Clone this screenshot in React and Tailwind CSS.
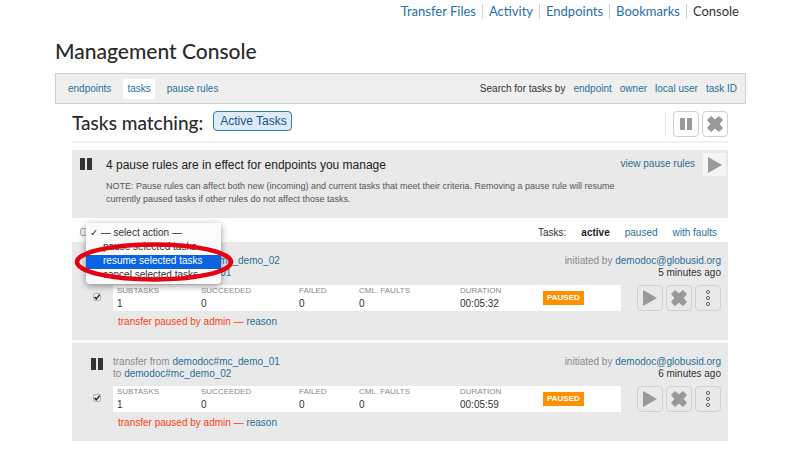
import React from "react";

const TASKS = [
  {
    id: "t1",
    from: "demodoc#mc_demo_02",
    to: "demodoc#mc_demo_01",
    age: "5 minutes ago",
    duration: "00:05:32",
  },
  {
    id: "t2",
    from: "demodoc#mc_demo_01",
    to: "demodoc#mc_demo_02",
    age: "6 minutes ago",
    duration: "00:05:59",
  },
];

function PauseIcon({ className }) {
  return (
    <svg viewBox="0 0 12 12" className={className} fill="currentColor" aria-hidden="true">
      <rect x="0" y="0" width="5" height="12" rx="0.6" />
      <rect x="7" y="0" width="5" height="12" rx="0.6" />
    </svg>
  );
}

function PlayIcon() {
  return (
    <svg viewBox="0 0 14 16" className="h-4 w-3.5" fill="currentColor" aria-hidden="true">
      <path d="M0 0L14 8L0 16Z" />
    </svg>
  );
}

function CrossIcon() {
  return (
    <svg viewBox="0 0 16 16" className="h-4 w-4" fill="currentColor" aria-hidden="true">
      <path
        d="M4 0.4L8 3.8L12 0.4L15.6 4L12.2 8L15.6 12L12 15.6L8 12.2L4 15.6L0.4 12L3.8 8L0.4 4Z"
        stroke="currentColor"
        strokeWidth="0.8"
        strokeLinejoin="round"
      />
    </svg>
  );
}

function DotsIcon() {
  return (
    <svg viewBox="0 0 6 18" className="h-[18px] w-1.5" fill="none" stroke="#666" aria-hidden="true">
      <circle cx="3" cy="3" r="1.6" />
      <circle cx="3" cy="9" r="1.6" />
      <circle cx="3" cy="15" r="1.6" />
    </svg>
  );
}

function IconButton({ label, children }) {
  return (
    <button
      type="button"
      aria-label={label}
      className="flex h-[26px] w-[26px] items-center justify-center rounded-sm border border-[#d0d0d0] text-[#999]"
    >
      {children}
    </button>
  );
}

function Checkbox({ label, className = "", ...props }) {
  return (
    <span className={`grid h-2 w-2 shrink-0 ${className}`}>
      <input
        type="checkbox"
        aria-label={label}
        className="peer col-start-1 row-start-1 h-2 w-2 appearance-none rounded-xs border border-[#b0b0b0] bg-[#eeeeee]"
        {...props}
      />
      <svg
        viewBox="0 0 8 8"
        className="pointer-events-none invisible col-start-1 row-start-1 h-2 w-2 peer-checked:visible"
        fill="none"
        stroke="#222"
        strokeWidth="1.5"
        aria-hidden="true"
      >
        <path d="M1.6 4L3.3 5.9L6.6 1.6" />
      </svg>
    </span>
  );
}

function Link({ children, className = "" }) {
  return (
    <a href="#" className={`text-[#2a6f98] ${className}`}>
      {children}
    </a>
  );
}

function NavLinks() {
  return (
    <nav className="flex justify-end divide-x divide-[#d4d4d4] pt-1 pr-px font-['Lato',sans-serif] text-[13px] leading-[15px] text-[#1f6fae]">
      <a href="#" className="px-1.5">Transfer Files</a>
      <a href="#" className="px-1.5">Activity</a>
      <a href="#" className="px-1.5">Endpoints</a>
      <a href="#" className="px-1.5">Bookmarks</a>
      <a href="#" className="px-1.5 text-[#333]">Console</a>
    </nav>
  );
}

function ActionMenu() {
  return (
    <div className="absolute top-[5px] left-3.5 z-10">
      <select
        size={4}
        aria-label="Action for selected tasks"
        className="block h-[61px] w-[135px] appearance-none overflow-hidden rounded-b-sm bg-[#fbfbfb] pt-1 text-[10px] leading-[14px] text-[#333] shadow-[0_2px_7px_rgba(0,0,0,0.4)] outline-none"
      >
        <option className="h-3.5 min-h-0 p-0 pl-1">✓ — select action —</option>
        <option className="h-3.5 min-h-0 p-0 pl-[17px]">pause selected tasks</option>
        <option className="h-3.5 min-h-0 bg-[#0a63e0] p-0 pl-[17px] text-white">resume selected tasks</option>
        <option className="h-3.5 min-h-0 p-0 pl-[17px]">cancel selected tasks</option>
      </select>
      <svg
        viewBox="0 0 160 42"
        className="pointer-events-none absolute top-[18px] left-[-12px] h-[42px] w-[160px]"
        fill="none"
        stroke="#e60012"
        strokeWidth="4.5"
        aria-hidden="true"
      >
        <ellipse cx="80" cy="21" rx="77" ry="17.5" />
      </svg>
    </div>
  );
}

function Stat({ label, value, className }) {
  return (
    <div className={className}>
      <dt className="text-[8px] leading-3 text-[#8a8a8a]">{label}</dt>
      <dd className="leading-[14px] text-[#333]">{value}</dd>
    </div>
  );
}

function TaskRow({ task }) {
  return (
    <article className="flex gap-2.5 bg-[#e9e9e9] pt-[13px] pr-[7px] pb-3 pl-[19px]">
      <div className="flex w-3 flex-col items-center pt-0.5">
        <PauseIcon className="h-3 w-3 shrink-0 text-[#333]" />
        <Checkbox defaultChecked label={`Select transfer from ${task.from}`} className="mt-6" />
      </div>
      <div className="min-w-0 flex-1 leading-3">
        <div className="flex justify-between text-[#8a8a8a]">
          <div>
            <p>transfer from <Link>{task.from}</Link></p>
            <p>to <Link>{task.to}</Link></p>
          </div>
          <div className="text-right">
            <p>initiated by <Link>demodoc@globusid.org</Link></p>
            <p className="text-[#333]">{task.age}</p>
          </div>
        </div>
        <div className="mt-1.5 flex gap-4">
          <div className="flex flex-1 items-center bg-white">
            <dl className="flex pl-1">
              <Stat label="SUBTASKS" value="1" className="w-[84px]" />
              <Stat label="SUCCEEDED" value="0" className="w-[98px]" />
              <Stat label="FAILED" value="0" className="w-[60px]" />
              <Stat label="CML. FAULTS" value="0" className="w-[101px]" />
              <Stat label="DURATION" value={task.duration} className="w-[83px]" />
            </dl>
            <strong className="bg-[#ff9100] px-1 text-[8px] leading-[14px] text-white">PAUSED</strong>
          </div>
          <div className="flex gap-[3px]">
            <IconButton label="Resume"><PlayIcon /></IconButton>
            <IconButton label="Cancel"><CrossIcon /></IconButton>
            <IconButton label="More"><DotsIcon /></IconButton>
          </div>
        </div>
        <p className="mt-[5px] pl-[5px] text-[#ff4010]">
          transfer paused by admin — <Link>reason</Link>
        </p>
      </div>
    </article>
  );
}

export default function App() {
  return (
    <div className="min-h-screen bg-white pr-[54px] pb-2 pl-[55px] font-['Liberation_Sans',Arial,sans-serif] text-[10px] text-[#333]">
      <NavLinks />
      <h1 className="mt-[18px] font-['Lato',sans-serif] text-[21px] leading-7 font-medium text-[#2b2b2b]">
        Management Console
      </h1>
      <div className="mt-2 flex h-[31px] items-center justify-between border border-[#cfcfcf] bg-[#efefef] px-2">
        <div className="flex gap-2">
          <Link className="px-1 leading-5">endpoints</Link>
          <Link className="bg-white px-1 leading-5">tasks</Link>
          <Link className="px-1 leading-5">pause rules</Link>
        </div>
        <div className="flex gap-2">
          <span>Search for tasks by</span>
          <Link>endpoint</Link>
          <Link>owner</Link>
          <Link>local user</Link>
          <Link>task ID</Link>
        </div>
      </div>

      <main className="mr-[18px] ml-[17px]">
        <div className="flex items-start justify-between border-b-2 border-[#f2f2f2] pt-[7px]">
          <div className="flex gap-2.5">
            <h2 className="font-['Lato',sans-serif] text-[19px] leading-6 font-medium text-[#2b2b2b]">
              Tasks matching:
            </h2>
            <button type="button" className="h-5 rounded-sm border border-[#3a7ca8] bg-[#dfeaf8] pr-1 pl-1.5 text-[12px] leading-4 text-[#14568a]">
              Active Tasks
            </button>
          </div>
          <div className="mb-1 flex gap-[3px] border-l border-[#e8e8e8] pl-[7px]">
            <IconButton label="Pause all"><PauseIcon className="h-3 w-3" /></IconButton>
            <IconButton label="Cancel all"><CrossIcon /></IconButton>
          </div>
        </div>

        <section className="mt-[7px] flex h-[68px] gap-3.5 bg-[#e9e9e9] pt-[3px] pr-0.5 pl-2">
          <PauseIcon className="mt-[5px] h-3 w-3 shrink-0 text-[#333]" />
          <div className="flex-1">
            <div className="flex items-start">
              <h3 className="flex-1 pt-1 text-[12px] leading-4 text-[#222]">
                4 pause rules are in effect for endpoints you manage
              </h3>
              <div className="flex gap-2">
                <Link className="pt-[3px]">view pause rules</Link>
                <button type="button" aria-label="Resume all" className="flex h-[23px] w-[23px] items-center justify-center bg-[#f5f5f5] text-[#999]">
                  <PlayIcon />
                </button>
              </div>
            </div>
            <p className="mt-1 max-w-[530px] text-[9px] leading-[13px] text-[#555]">
              NOTE: Pause rules can affect both new (incoming) and current tasks that meet their criteria. Removing a
              pause rule will resume currently paused tasks if other rules do not affect those tasks.
            </p>
          </div>
        </section>

        <div className="relative flex h-6 items-center justify-between pr-[11px] pl-2">
          <Checkbox label="Select all tasks" className="mt-1" />
          <ActionMenu />
          <div className="flex gap-[15px] pt-1">
            <span>Tasks:</span>
            <strong className="text-[#222]">active</strong>
            <Link>paused</Link>
            <Link>with faults</Link>
          </div>
        </div>

        <div className="flex flex-col gap-[3px]">
          {TASKS.map((task) => (
            <TaskRow key={task.id} task={task} />
          ))}
        </div>
      </main>
    </div>
  );
}
